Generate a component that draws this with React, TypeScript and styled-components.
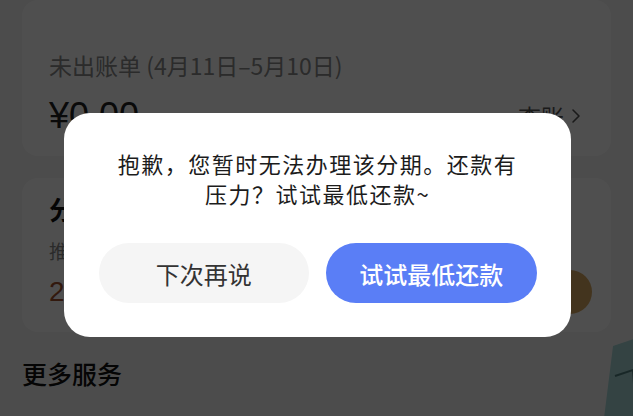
import React from "react";
import styled, { createGlobalStyle } from "styled-components";
import { ChevronRight } from "lucide-react";

const GlobalStyle = createGlobalStyle`
  html, body {
    margin: 0;
    padding: 0;
    width: 633px;
    height: 416px;
    overflow: hidden;
    background: #f6f6f6;
    font-family: "Noto Sans CJK SC", "Noto Sans", sans-serif;
  }
`;

const Page = styled.div`
  width: 633px;
  height: 416px;
  box-sizing: border-box;
  padding: 0 22px;
  display: flex;
  flex-direction: column;
  gap: 22px;
  overflow: hidden;
  position: relative;
`;

const Card = styled.div<{ $top?: number }>`
  background: #ffffff;
  border-radius: 16px;
  padding: ${(p) => p.$top ?? 20}px 27px 18px 27px;
  display: flex;
  flex-direction: column;
`;

const BillTitle = styled.div`
  font-size: 23px;
  color: #8a8a8a;
  line-height: 30px;
`;

const AmountRow = styled.div`
  display: flex;
  justify-content: space-between;
  align-items: center;
  margin-top: 14px;
`;

const Amount = styled.div`
  font-size: 36px;
  font-weight: 500;
  color: #222;
  line-height: 44px;
  font-family: "Liberation Sans", "Noto Sans CJK SC", sans-serif;
`;

const LinkText = styled.div`
  display: flex;
  align-items: center;
  font-size: 23px;
  color: #555;
  margin-right: -4px;
`;

const SectionTitle = styled.div`
  font-size: 26px;
  font-weight: 700;
  color: #111;
  line-height: 34px;
`;

const Hint = styled.div`
  font-size: 19px;
  color: #888;
  margin-top: 12px;
  line-height: 26px;
`;

const PlanRow = styled.div`
  display: flex;
  justify-content: space-between;
  align-items: center;
  margin-top: 6px;
`;

const PlanNum = styled.div`
  font-size: 28px;
  color: #a2532e;
  font-family: "Liberation Sans", sans-serif;
`;

const GoldButton = styled.div`
  width: 110px;
  height: 44px;
  border-radius: 22px;
  background: #d7a862;
  margin-right: -8px;
`;

const MoreTitle = styled.div`
  font-size: 25px;
  font-weight: 500;
  color: #111;
  line-height: 34px;
  margin-top: 2px;
`;

const Deco = styled.svg`
  position: absolute;
  right: -10px;
  bottom: -10px;
`;

const Overlay = styled.div`
  position: fixed;
  inset: 0;
  background: rgba(0, 0, 0, 0.69);
  display: flex;
  justify-content: center;
  align-items: flex-start;
  padding-top: 113px;
  padding-left: 1px;
`;

const Dialog = styled.div`
  width: 507px;
  box-sizing: border-box;
  background: #fff;
  border-radius: 26px;
  padding: 35px 34px 34px 35px;
  display: flex;
  flex-direction: column;
  gap: 35px;
`;

const Message = styled.div`
  font-size: 22px;
  line-height: 30px;
  letter-spacing: 1.5px;
  color: #1c1c1c;
  text-align: center;
  padding: 0 11px;
`;

const Actions = styled.div`
  display: grid;
  grid-template-columns: 1fr 1fr;
  gap: 17px;
`;

const ActionButton = styled.button<{ $primary?: boolean }>`
  height: 60px;
  border: none;
  border-radius: 30px;
  font-family: inherit;
  font-size: 24px;
  font-weight: ${(p) => (p.$primary ? 500 : 400)};
  color: ${(p) => (p.$primary ? "#fff" : "#333")};
  background: ${(p) => (p.$primary ? "#5a7ef6" : "#f5f5f5")};
  cursor: pointer;
`;

export default function App() {
  return (
    <>
      <GlobalStyle />
      <Page>
        <Card $top={50}>
          <BillTitle>未出账单 (4月11日–5月10日)</BillTitle>
          <AmountRow>
            <Amount>¥0.00</Amount>
            <LinkText>
              查账
              <ChevronRight size={24} strokeWidth={1.6} />
            </LinkText>
          </AmountRow>
        </Card>
        <Card $top={14}>
          <SectionTitle>分期还款</SectionTitle>
          <Hint>推荐分期方案</Hint>
          <PlanRow>
            <PlanNum>24期</PlanNum>
            <GoldButton />
          </PlanRow>
        </Card>
        <MoreTitle>更多服务</MoreTitle>
        <Deco width="40" height="90" viewBox="0 0 40 90">
          <path d="M10 10 L40 0 L40 90 L0 90 Z" fill="#a8d8d8" />
          <path d="M12 40 L30 34 L34 90" stroke="#4f7f7f" strokeWidth="2" fill="none" />
        </Deco>
      </Page>
      <Overlay>
        <Dialog>
          <Message>抱歉，您暂时无法办理该分期。还款有压力？试试最低还款~</Message>
          <Actions>
            <ActionButton>下次再说</ActionButton>
            <ActionButton $primary>试试最低还款</ActionButton>
          </Actions>
        </Dialog>
      </Overlay>
    </>
  );
}
